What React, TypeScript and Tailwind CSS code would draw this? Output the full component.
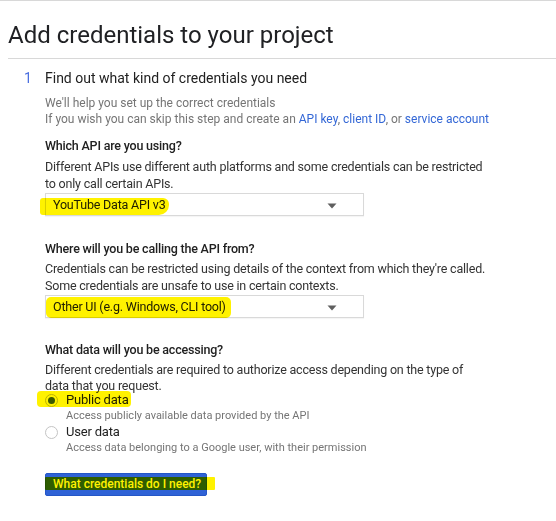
import React from "react";

const Hl = ({ className }: { className: string }) => (
  <span
    aria-hidden
    className={"pointer-events-none absolute bg-[#fff200] mix-blend-multiply " + className}
  />
);

const Caret = () => (
  <svg width="10" height="6" viewBox="0 0 10 6" className="absolute right-[26px] top-[9px]">
    <path d="M0.5 0.5 L9.5 0.5 L5 5.5 Z" fill="#5f5f5f" />
  </svg>
);

const Select = ({ value, hl }: { value: string; hl: string }) => (
  <div className="relative mt-[1.5px] h-[23px] w-[319px] whitespace-nowrap border border-[#d9d9d9] bg-white pl-[7px] text-[12.5px] leading-[21px] tracking-[-0.2px] text-[#212121] shadow-[0_1px_1px_rgba(0,0,0,0.04)]">
    {value}
    <Caret />
    <Hl className={hl} />
  </div>
);

export default function App() {
  return (
    <div
      className="min-h-[521px] w-[556px] border-t border-[#d8d8d8] bg-white text-[#212121]"
      style={{ fontFamily: "Roboto, 'Liberation Sans', Arial, sans-serif" }}
    >
      <h1 className="ml-2 border-b border-[#d8d8d8] pt-[19px] pb-[8px] text-[24px] font-normal leading-[30px] text-[#202124]">
        Add credentials to your project
      </h1>

      <div className="mt-[9px] flex text-[14px] leading-[20px]">
        <span className="w-[45px] pl-[24px] text-[#4a6fe0]">1</span>
        <span className="text-[#212121]">Find out what kind of credentials you need</span>
      </div>

      <div className="pl-[45px]">
        <div className="mt-[7px] text-[12px] leading-[16px] text-[#757575]">
          <p>We'll help you set up the correct credentials</p>
          <p>
            If you wish you can skip this step and create an{" "}
            <span className="text-[#3367d6]">API key</span>,{" "}
            <span className="text-[#3367d6]">client ID</span>, or{" "}
            <span className="text-[#3367d6]">service account</span>
          </p>
        </div>

        <p className="mt-[11px] text-[12.5px] font-medium leading-[16px] tracking-[-0.2px] text-[#212121]">
          Which API are you using?
        </p>
        <p className="mt-[3.5px] text-[12.5px] leading-[17px] tracking-[-0.2px] text-[#333]">
          Different APIs use different auth platforms and some credentials can be restricted
          <br />
          to only call certain APIs.
        </p>
        <Select
          value="YouTube Data API v3"
          hl="left-[-6px] top-[4px] h-[17px] w-[129px] rounded-[3px_6px_10px_3px]"
        />

        <p className="mt-[25px] text-[12.5px] font-medium leading-[16px] tracking-[-0.2px] text-[#212121]">
          Where will you be calling the API from?
        </p>
        <p className="mt-[2.5px] text-[12.5px] leading-[17px] tracking-[-0.2px] text-[#333]">
          Credentials can be restricted using details of the context from which they're called.
          <br />
          Some credentials are unsafe to use in certain contexts.
        </p>
        <Select
          value="Other UI (e.g. Windows, CLI tool)"
          hl="left-[0px] top-[1px] h-[21px] w-[185px] rounded-[5px]"
        />

        <p className="mt-[24px] text-[12.5px] font-medium leading-[16px] tracking-[-0.2px] text-[#212121]">
          What data will you be accessing?
        </p>
        <p className="mt-[4px] text-[12.5px] leading-[16px] tracking-[-0.2px] text-[#333]">
          Different credentials are required to authorize access depending on the type of
          <br />
          data that you request.
        </p>

        <div className="relative mt-[-2px]">
          <div className="flex items-center text-[13px] leading-[16px] tracking-[-0.2px] text-[#212121]">
            <span className="mr-[8px] flex h-[13px] w-[13px] items-center justify-center rounded-full border border-[#bdbdbd] bg-white">
              <span className="h-[7px] w-[7px] rounded-full bg-[#3b5f9a]" />
            </span>
            Public data
          </div>
          <Hl className="left-[-8px] top-[-1px] h-[16px] w-[94px] rounded-[4px]" />
        </div>
        <p className="pl-[21px] text-[11px] leading-[15px] text-[#757575]">
          Access publicly available data provided by the API
        </p>
        <div className="mt-[1px] flex items-center text-[13px] leading-[16px] tracking-[-0.2px] text-[#212121]">
          <span className="mr-[8px] h-[13px] w-[13px] rounded-full border border-[#c4c4c4] bg-white" />
          User data
        </div>
        <p className="pl-[21px] text-[11px] leading-[15px] text-[#757575]">
          Access data belonging to a Google user, with their permission
        </p>

        <div className="relative mt-[16px] w-fit">
          <button className="h-[23px] w-[162px] whitespace-nowrap rounded-[2px] border border-[#2556c7] bg-[#2f62d6] pl-[7px] text-left text-[12px] font-medium leading-[21px] text-white">
            What credentials do I need?
          </button>
          <Hl className="left-[0px] top-[6px] h-[13px] w-[170px] rounded-[1px]" />
        </div>
      </div>
    </div>
  );
}
